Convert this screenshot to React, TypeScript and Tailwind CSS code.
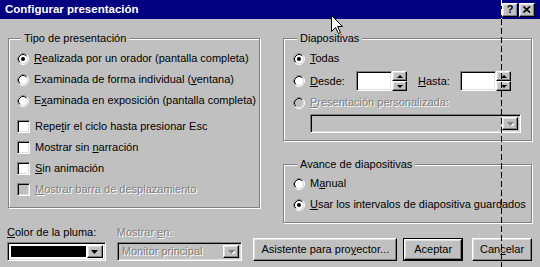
import React from "react";

const raised =
  "border border-t-white border-l-white border-r-black border-b-black shadow-[inset_-1px_-1px_0_#808080,inset_1px_1px_0_#dfdfdf] bg-[#c0c0c0]";
const sunken =
  "border border-t-[#808080] border-l-[#808080] border-r-white border-b-white shadow-[inset_1px_1px_0_#000,inset_-1px_-1px_0_#dfdfdf]";
const dim = "text-[#808080] [text-shadow:1px_1px_0_#fff]";

function Radio({ checked = false, disabled = false }: { checked?: boolean; disabled?: boolean }) {
  return (
    <svg width="12" height="12" viewBox="0 0 12 12" className="shrink-0">
      <circle cx="6" cy="6" r="5.5" fill="none" stroke="#fff" />
      <path d="M2.11 9.89 A5.5 5.5 0 0 1 9.89 2.11" fill="none" stroke="#808080" />
      <circle cx="6" cy="6" r="4.5" fill={disabled ? "#c0c0c0" : "#fff"} stroke="#dfdfdf" />
      <path d="M2.82 9.18 A4.5 4.5 0 0 1 9.18 2.82" fill="none" stroke="#000" />
      {checked && <circle cx="6" cy="6" r="2" fill="#000" />}
    </svg>
  );
}

function Check({ disabled = false }: { disabled?: boolean }) {
  return <div className={`${sunken} w-[13px] h-[13px] shrink-0 ${disabled ? "bg-[#c0c0c0]" : "bg-white"}`} />;
}

function Arrow({ up = false, disabled = false }: { up?: boolean; disabled?: boolean }) {
  const d = up ? "M0 3 L3 0 L6 3 Z" : "M0 0 L7 0 L3.5 4 Z";
  return (
    <svg width={up ? 6 : 7} height={up ? 3 : 4} viewBox={up ? "0 0 6 3" : "0 0 7 4"}>
      {disabled && <path d={d} fill="#fff" transform="translate(1 1)" />}
      <path d={d} fill={disabled ? "#808080" : "#000"} />
    </svg>
  );
}

function Group({ title, className, children }: { title: string; className: string; children: React.ReactNode }) {
  return (
    <fieldset className={`border border-[#808080] shadow-[1px_1px_0_#fff,inset_1px_1px_0_#fff] ${className}`}>
      <legend className="ml-[4px] px-[3px] leading-[14px] bg-[#c0c0c0]">{title}</legend>
      {children}
    </fieldset>
  );
}

function RadioRow({ checked, disabled, children }: { checked?: boolean; disabled?: boolean; children: React.ReactNode }) {
  return (
    <div className="flex items-center h-[21px] gap-[5px]">
      <Radio checked={checked} disabled={disabled} />
      <span className={disabled ? dim : ""}>{children}</span>
    </div>
  );
}

function CheckRow({ disabled, children }: { disabled?: boolean; children: React.ReactNode }) {
  return (
    <div className="flex items-center h-[21px] gap-[5px]">
      <Check disabled={disabled} />
      <span className={disabled ? dim : ""}>{children}</span>
    </div>
  );
}

function Spin() {
  return (
    <div className="flex flex-col w-[15px] h-[20px]">
      <div className={`${raised} flex-1 flex items-center justify-center`}>
        <Arrow up />
      </div>
      <div className={`${raised} flex-1 flex items-center justify-center`}>
        <svg width="6" height="3" viewBox="0 0 6 3">
          <path d="M0 0 L6 0 L3 3 Z" fill="#000" />
        </svg>
      </div>
    </div>
  );
}

function Combo({ className, disabled, children }: { className: string; disabled?: boolean; children?: React.ReactNode }) {
  return (
    <div className={`${sunken} ${disabled ? "bg-[#c0c0c0]" : "bg-white"} flex items-stretch p-[2px] ${className}`}>
      <div className="flex-1 flex items-center min-w-0">{children}</div>
      <div className={`${raised} w-[16px] flex items-center justify-center`}>
        <Arrow disabled={disabled} />
      </div>
    </div>
  );
}

export default function App() {
  return (
    <div className="relative w-[540px] h-[267px] overflow-hidden bg-[#c0c0c0] text-black text-[11px] leading-[13px] font-['Liberation_Sans',Arial,sans-serif]">
      {/* title bar */}
      <div className="h-[19px] bg-[#000080] flex items-center justify-between pl-[5px] pr-[5px]">
        <span className="text-white font-bold text-[11.5px]">Configurar presentación</span>
        <div className="flex gap-[1px]">
          <div className={`${raised} w-[16px] h-[14px] flex items-center justify-center font-bold text-[11px] leading-none`}>?</div>
          <div className={`${raised} w-[16px] h-[14px] flex items-center justify-center`}>
            <svg width="8" height="7" viewBox="0 0 8 7">
              <path d="M0.5 0.5 L7 6.5 M7 0.5 L0.5 6.5" stroke="#000" strokeWidth="1.6" />
            </svg>
          </div>
        </div>
      </div>

      <div className="flex flex-col px-[8px] pt-[12px]">
        <div className="flex items-start gap-[23px] h-[192px]">
          <Group title="Tipo de presentación" className="w-[252px] h-[177px] pl-[8px]">
            <div className="mt-[3px]">
              <RadioRow checked>
                <u>R</u>ealizada por un orador (pantalla completa)
              </RadioRow>
              <RadioRow>
                Examinada de forma individual (<u>v</u>entana)
              </RadioRow>
              <RadioRow>
                E<u>x</u>aminada en exposición (pantalla completa)
              </RadioRow>
            </div>
            <div className="mt-[5px]">
              <CheckRow>
                Repe<u>t</u>ir el ciclo hasta presionar Esc
              </CheckRow>
              <CheckRow>
                Mostrar sin <u>n</u>arración
              </CheckRow>
              <CheckRow>
                <u>S</u>in animación
              </CheckRow>
              <CheckRow disabled>
                <u>M</u>ostrar barra de desplazamiento
              </CheckRow>
            </div>
          </Group>

          <div className="flex flex-col w-[249px] gap-[16px]">
            <Group title="Diapositivas" className="h-[110px] pl-[9px]">
              <div className="mt-[3px]">
                <RadioRow checked>
                  <u>T</u>odas
                </RadioRow>
                <div className="flex items-center h-[22px] mt-[1px]">
                  <Radio />
                  <span className="ml-[5px] w-[46px]">
                    <u>D</u>esde:
                  </span>
                  <div className={`${sunken} bg-white w-[36px] h-[20px]`} />
                  <Spin />
                  <span className="ml-[11px] w-[42px]">
                    <u>H</u>asta:
                  </span>
                  <div className={`${sunken} bg-white w-[36px] h-[20px]`} />
                  <Spin />
                </div>
                <RadioRow disabled>
                  <u>P</u>resentación personalizada:
                </RadioRow>
                <Combo disabled className="ml-[17px] mt-[1px] w-[211px] h-[19px]" />
              </div>
            </Group>
            <Group title="Avance de diapositivas" className="h-[66px] pl-[9px]">
              <div className="mt-[2px]">
                <RadioRow>
                  M<u>a</u>nual
                </RadioRow>
                <RadioRow checked>
                  <u>U</u>sar los intervalos de diapositiva guardados
                </RadioRow>
              </div>
            </Group>
          </div>
        </div>

        <div className="flex items-end mt-[3px] -ml-[1px]">
          <div className="flex flex-col w-[99px]">
            <span className="mb-[3px]">
              <u>C</u>olor de la pluma:
            </span>
            <Combo className="h-[19px]">
              <div className="w-full h-full border border-white bg-black" />
            </Combo>
          </div>
          <div className="flex flex-col w-[126px] ml-[11px]">
            <span className={`${dim} mb-[3px]`}>
              Mostrar <u>e</u>n:
            </span>
            <Combo disabled className="h-[19px]">
              <span className={`${dim} pl-[2px]`}>Monitor principal</span>
            </Combo>
          </div>
          <button className={`${raised} ml-[11px] w-[144px] h-[23px] text-[11px]`}>
            Asistente para pro<u>y</u>ector...
          </button>
          <div className="ml-[6px] border border-black">
            <button className={`${raised} w-[58px] h-[21px] text-[11px]`}>Aceptar</button>
          </div>
          <button className={`${raised} ml-[9px] w-[60px] h-[23px] text-[11px]`}>
            Can<u>c</u>elar
          </button>
        </div>
      </div>

      {/* xor dashed guide line */}
      <div className="absolute left-[501px] top-0 h-[19px] w-px bg-[repeating-linear-gradient(to_bottom,#fff_0_6px,transparent_6px_9px)]" />
      <div className="absolute left-[501px] top-[19px] bottom-0 w-px bg-[repeating-linear-gradient(to_bottom,#000_0_6px,transparent_6px_9px)]" />

      {/* mouse pointer */}
      <svg className="absolute left-[331px] top-[15px]" width="13" height="20" viewBox="0 0 13 20">
        <path d="M0.5 0.5 L0.5 16.5 L4.5 12.5 L7.5 18.5 L9.5 17.5 L6.5 11.5 L11.5 11.5 Z" fill="#fff" stroke="#000" />
      </svg>
    </div>
  );
}
